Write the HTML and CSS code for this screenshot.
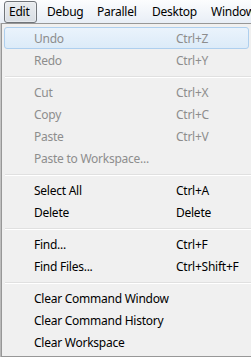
FILE: index.html
```html
<!DOCTYPE html>
<html>
<head>
<meta charset="utf-8">
<link rel="stylesheet" href="styles.css">
</head>
<body>
<div class="screen">
  <div class="menubar">
    <span class="top-item active">Edit</span>
    <span class="top-item w-debug">Debug</span>
    <span class="top-item w-parallel">Parallel</span>
    <span class="top-item w-desktop">Desktop</span>
    <span class="top-item">Window</span>
  </div>
  <div class="below">
    <div class="edge"></div>
    <div class="menu">
      <div class="item disabled hover"><span class="label">Undo</span><span class="key">Ctrl+Z</span></div>
      <div class="item disabled"><span class="label">Redo</span><span class="key">Ctrl+Y</span></div>
      <div class="sep"></div>
      <div class="item disabled"><span class="label">Cut</span><span class="key">Ctrl+X</span></div>
      <div class="item disabled"><span class="label">Copy</span><span class="key">Ctrl+C</span></div>
      <div class="item disabled"><span class="label">Paste</span><span class="key">Ctrl+V</span></div>
      <div class="item disabled"><span class="label">Paste to Workspace...</span><span class="key"></span></div>
      <div class="sep"></div>
      <div class="item"><span class="label">Select All</span><span class="key">Ctrl+A</span></div>
      <div class="item"><span class="label">Delete</span><span class="key">Delete</span></div>
      <div class="sep"></div>
      <div class="item"><span class="label">Find...</span><span class="key">Ctrl+F</span></div>
      <div class="item"><span class="label">Find Files...</span><span class="key">Ctrl+Shift+F</span></div>
      <div class="sep"></div>
      <div class="item"><span class="label">Clear Command Window</span><span class="key"></span></div>
      <div class="item"><span class="label">Clear Command History</span><span class="key"></span></div>
      <div class="item"><span class="label">Clear Workspace</span><span class="key"></span></div>
    </div>
  </div>
</div>
</body>
</html>
```
FILE: styles.css
```css
html, body {
  margin: 0;
  padding: 0;
  background: #ffffff;
}
.screen {
  width: 251px;
  height: 357px;
  overflow: hidden;
  font-family: "Noto Sans", "Open Sans", sans-serif;
  font-size: 12px;
  letter-spacing: -0.25px;
  color: #000;
  background: #d8dde4;
}
.menubar {
  height: 23px;
  display: flex;
  align-items: flex-start;
  background: linear-gradient(#fcfdfe, #e8eef6);
  white-space: nowrap;
}
.top-item {
  display: block;
  flex: none;
  height: 20px;
  line-height: 20px;
  margin-top: 1px;
  border: 1px solid transparent;
  border-radius: 3px;
  box-sizing: content-box;
  padding: 0;
}
.top-item.active {
  width: 27px;
  margin-left: 4px;
  padding-left: 4px;
  margin-right: 9px;
  border-color: #71757a;
  background: linear-gradient(#e9ecef, #d9dee4);
  box-shadow: inset 0 0 0 1px rgba(255,255,255,0.35);
}
.w-debug { width: 48px; }
.w-parallel { width: 53px; }
.w-desktop { width: 57px; }
.below {
  display: flex;
  height: 334px;
}
.edge {
  width: 1px;
  background: linear-gradient(#c9c9c9, #b8b8b8);
}
.menu {
  flex: 1;
  background: #f0f0f0;
  border: 1px solid #979797;
  border-right: none;
  padding: 3px 0 2px 0;
  margin-right: -10px;
}
.item {
  height: 22px;
  line-height: 22px;
  display: flex;
  margin: 0 2px 0 2px;
  border: 1px solid transparent;
  border-radius: 3px;
  box-sizing: border-box;
  white-space: nowrap;
}
.item .label {
  width: 142px;
  padding-left: 29px;
}
.item .key {
  flex: 1;
}
.item.disabled {
  color: #8d8d8d;
}
.item.hover {
  border-color: #aecfee;
  background: linear-gradient(#eaf3fc, #dcebf8);
  margin-right: 12px;
}
.sep {
  height: 1px;
  margin: 5px 0 3px 3px;
  background: #e0e0e0;
  border-bottom: 1px solid #ffffff;
}
```
